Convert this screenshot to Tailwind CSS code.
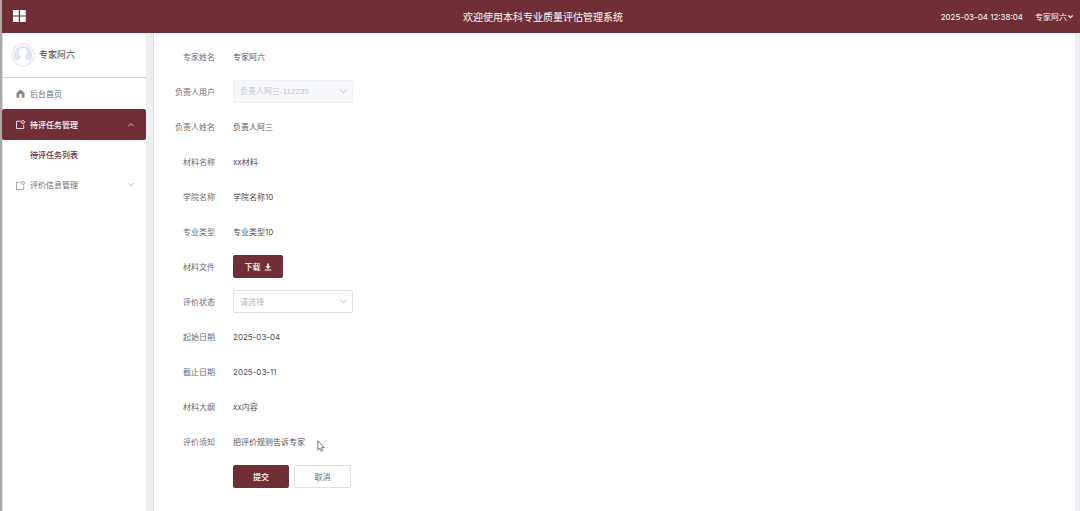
<!DOCTYPE html>
<html lang="zh-CN">
<head>
<meta charset="utf-8">
<meta name="viewport" content="width=device-width, initial-scale=1">
<title>本科专业质量评估管理系统</title>
<script src="https://cdn.jsdelivr.net/npm/@tailwindcss/browser@4"></script>
</head>
<body class="flex min-h-screen flex-col border-l-2 border-[#a9a9a9] bg-[#ededf2] font-['Inter','Noto_Sans_CJK_SC',sans-serif] text-[8px] leading-[12px] text-[#6a6c72]">
  <header class="grid h-[33px] shrink-0 grid-cols-[1fr_auto_1fr] items-center bg-[#702f36] pr-[7px] pl-[11px] text-white">
    <button type="button" aria-label="菜单" class="w-[13px]">
      <svg class="size-[13px]" viewBox="0 0 13 13" fill="currentColor"><path d="M0 0h5.800v5.500H0zM7 0h5.800v5.500H7zM0 6.500h5.800V12H0zM7 6.500h5.800V12H7z"/></svg>
    </button>
    <h1 class="text-[10px] leading-4">欢迎使用本科专业质量评估管理系统</h1>
    <div class="flex items-center justify-end gap-3">
      <time>2025-03-04 12:38:04</time>
      <button type="button" class="flex items-center gap-px">专家阿六
        <svg class="size-[5px]" viewBox="0 0 5 5" fill="none" stroke="currentColor" stroke-width="1.3"><path d="M.4 1.500 2.500 3.600 4.600 1.500"/></svg>
      </button>
    </div>
  </header>

  <div class="flex grow">
    <aside class="w-[144px] shrink-0 rounded-t-sm border-l border-[#dcdcdc] bg-white">
      <div class="flex h-[45px] items-center gap-1 border-b border-[#d3d3d3] pl-2 text-[9px] text-[#404246]">
        <svg class="size-6" viewBox="0 0 24 24">
          <defs><clipPath id="face"><circle cx="12" cy="12" r="9.300"/></clipPath></defs>
          <circle cx="12" cy="12" r="11" fill="#fff" stroke="#ebebed" stroke-width="1.3"/>
          <g clip-path="url(#face)"><path fill="#dfe7f4" d="M0 0h24v24H0z"/><path fill="#fff" d="M12 5c2.600 0 4 1.800 4 4.300 0 2-.8 3.600-2 4.500v1.600l4 1.800c1.200.6 1.700 1.600 1.700 4.800H4.300c0-3.200.5-4.200 1.700-4.800l4-1.800v-1.600c-1.200-.9-2-2.500-2-4.500C8 6.800 9.400 5 12 5z"/></g>
        </svg>
        专家阿六
      </div>
      <nav>
        <a href="#" class="flex h-[31px] items-center gap-[5px] pl-[13px]">
          <svg class="size-[9px]" viewBox="0 0 9 9" fill="#85878b"><path d="M4.500.6.500 3.900v4.800h2.600V6.400c0-.9.600-1.400 1.400-1.400s1.400.5 1.400 1.400v2.300h2.600V3.900z"/></svg>
          后台首页
        </a>
        <button type="button" aria-expanded="true" class="-ml-px flex h-[31px] w-[144px] items-center gap-[5px] rounded-[2px] bg-[#702f36] pr-3 pl-[14px] font-medium text-white">
          <svg class="size-[9px]" viewBox="0 0 9 9" fill="none" stroke="currentColor" stroke-width=".8"><path d="M5 1.200H.5v7.300h7.200V4.600"/><circle cx="7" cy="2" r="1.500"/></svg>
          待评任务管理
          <svg class="ml-auto size-[6px]" viewBox="0 0 6 6" fill="none" stroke="currentColor" stroke-width=".7"><path d="M.3 4.300 3 1.600l2.700 2.700"/></svg>
        </button>
        <a href="#" class="flex h-[30px] items-center pl-[27px] font-medium text-[#702f36]">待评任务列表</a>
        <button type="button" aria-expanded="false" class="flex h-[30px] w-full items-center gap-[5px] pr-3 pl-[13px]">
          <svg class="size-[9px]" viewBox="0 0 9 9" fill="none" stroke="#909399" stroke-width=".8"><path d="M5 1.200H.5v7.300h7.200V4.600"/><circle cx="7" cy="2" r="1.500"/></svg>
          评价信息管理
          <svg class="ml-auto size-[6px]" viewBox="0 0 6 6" fill="none" stroke="#a4a6ac" stroke-width=".7"><path d="M.3 1.300 3 4l2.700-2.700"/></svg>
        </button>
      </nav>
    </aside>

    <main class="mr-[5px] ml-[7px] grow border-l border-[#e0e0e4] bg-white pt-3 pb-6">
      <form class="grid auto-rows-[23px] grid-cols-[61px_1fr] items-center gap-x-[18px] gap-y-3">
        <span class="text-right">专家姓名</span><output class="text-[#505257]">专家阿六</output>

        <label for="owner" class="text-right">负责人用户</label>
        <div class="relative w-[120px]">
          <select id="owner" disabled class="block h-[23px] w-full appearance-none rounded-[2px] border border-[#eff1f5] bg-[#f7f8fb] px-[6px] font-['Liberation_Sans','Noto_Sans_CJK_SC',sans-serif] text-[#c0c4cc] opacity-100"><option>负责人阿三-112233</option></select>
          <svg class="pointer-events-none absolute top-2 right-[6px] size-[7px]" viewBox="0 0 7 7" fill="none" stroke="#b7bbc3" stroke-width=".9"><path d="M.5 1.800 3.500 4.800l3-3"/></svg>
        </div>

        <span class="text-right">负责人姓名</span><output class="text-[#505257]">负责人阿三</output>
        <span class="text-right">材料名称</span><output class="text-[#505257]">xx材料</output>
        <span class="text-right">学院名称</span><output class="text-[#505257]">学院名称10</output>
        <span class="text-right">专业类型</span><output class="text-[#505257]">专业类型10</output>

        <span class="text-right">材料文件</span>
        <button type="button" class="flex h-[23px] w-[50px] items-center justify-center gap-[3px] rounded-[2px] bg-[#702f36] font-medium text-white">下载
          <svg class="size-[8px]" viewBox="0 0 8 8" fill="currentColor"><path d="M3.200.5h1.600v2.700h1.900L4 5.900 1.300 3.200h1.900zM.7 6.400h6.600v1.100H.7z"/></svg>
        </button>

        <label for="status" class="text-right">评价状态</label>
        <div class="relative w-[120px]">
          <select id="status" class="block h-[23px] w-full appearance-none rounded-[2px] border border-[#dfe1e6] bg-white px-[6px] text-[#b4b8c0]"><option>请选择</option></select>
          <svg class="pointer-events-none absolute top-2 right-[6px] size-[7px]" viewBox="0 0 7 7" fill="none" stroke="#b7bbc3" stroke-width=".8"><path d="M.5 1.800 3.500 4.800l3-3"/></svg>
        </div>

        <span class="text-right">起始日期</span><output class="text-[#505257]">2025-03-04</output>
        <span class="text-right">截止日期</span><output class="text-[#505257]">2025-03-11</output>
        <span class="text-right">材料大纲</span><output class="text-[#505257]">xx内容</output>
        <span class="text-right">评价须知</span><output class="text-[#505257]">把评价规则告诉专家</output>

        <div class="col-start-2 flex gap-[5px]">
          <button type="submit" class="h-[23px] w-[56px] rounded-[2px] bg-[#702f36] font-medium text-white">提交</button>
          <button type="button" class="h-[23px] w-[57px] rounded-[2px] border border-[#dfe1e6] bg-white">取消</button>
        </div>
      </form>
    </main>
  </div>

  <svg class="pointer-events-none absolute top-[440px] left-[317px] h-3 w-2" viewBox="0 0 8 12" fill="#fff" stroke="#55575c" stroke-width=".8"><path d="M.8.800v9.400l2.100-2 1.400 3.200 1.500-.7-1.400-3h2.900z"/></svg>
</body>
</html>
